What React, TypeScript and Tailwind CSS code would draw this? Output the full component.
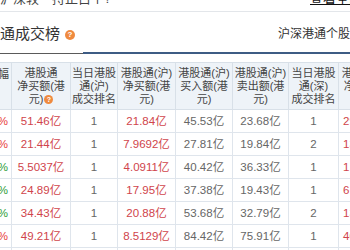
import React from "react";

const font = { fontFamily: '"Liberation Sans", "Noto Sans CJK SC", sans-serif' };

function Q() {
  return (
    <span className="inline-flex items-center justify-center w-[9px] h-[9px] rounded-full bg-[#ef8a3f] text-white text-[7px] leading-none align-middle ml-[1px] font-bold">
      ?
    </span>
  );
}

const widths = [50, 59, 47, 58, 57, 56, 50, 58];

type Cell = { t: string; c: string };

const rows: Cell[][] = [
  ["+0.63%", "51.46亿", "1", "21.84亿", "45.53亿", "23.68亿", "1", "29.62亿"],
  ["+1.12%", "21.44亿", "1", "7.9692亿", "27.81亿", "19.84亿", "2", "13.47亿"],
  ["-0.48%", "5.5037亿", "1", "4.0911亿", "40.42亿", "36.33亿", "1", "1.4126亿"],
  ["-0.75%", "24.89亿", "1", "17.95亿", "37.38亿", "19.43亿", "1", "6.9374亿"],
  ["-0.22%", "34.43亿", "1", "20.88亿", "53.68亿", "32.79亿", "2", "13.55亿"],
  ["+1.04%", "49.21亿", "1", "8.5129亿", "84.42亿", "75.91亿", "1", "40.70亿"],
  ["+0.36%", "30.12亿", "1", "12.30亿", "41.20亿", "28.90亿", "1", "17.82亿"],
].map((r) =>
  r.map((t, i) => {
    let c = "text-[#666]";
    if (i === 0) c = t.startsWith("+") ? "text-[#e8413e]" : "text-[#2f9e3a]";
    if (i === 1 || i === 3 || i === 7) c = "text-[#d0444b]";
    return { t, c };
  })
);

const headers: React.ReactNode[] = [
  <>涨跌幅</>,
  <>港股通<br />净买额(港<br />元)<Q /></>,
  <>当日港股<br />通(沪)<br />成交排名</>,
  <>港股通(沪)<br />净买额(港<br />元)</>,
  <>港股通(沪)<br />买入额(港<br />元)</>,
  <>港股通(沪)<br />卖出额(港<br />元)</>,
  <>当日港股<br />通(深)<br />成交排名</>,
  <>港股通(深)<br />净买额(港<br />元)</>,
];

export default function App() {
  return (
    <div className="w-[350px] h-[250px] overflow-hidden bg-white text-[#333]" style={font}>
      <div className="h-[12px] border-b border-[#e3e6ea] flex justify-between overflow-hidden">
        <div className="text-[13px] leading-[13px] -mt-[8px] text-[#444] whitespace-nowrap">沪深较　持正占个?</div>
        <div className="text-[13px] leading-[13px] -mt-[8px] text-[#111] underline whitespace-nowrap w-[40px] overflow-hidden">查看全部</div>
      </div>
      <div className="flex items-end h-[42px]">
        <div className="w-[83px] h-full flex items-center border-b border-[#5a5a5a]">
          <span className="text-[15px] text-[#333] whitespace-nowrap pt-[4px]">通成交榜</span>
          <span className="inline-flex items-center justify-center w-[10px] h-[10px] rounded-full bg-[#ef8a3f] text-white text-[8px] leading-none font-bold ml-[5px] mt-[4px]">?</span>
        </div>
        <div className="flex-1 h-full flex items-center justify-end border-b-2 border-[#3e5c84] overflow-hidden">
          <span className="text-[12px] text-[#333] whitespace-nowrap w-[72px] pt-[3px]">沪深港通个股</span>
        </div>
      </div>
      <div className="mt-[8px] overflow-hidden">
        <table className="table-fixed border-collapse ml-[-39px]" style={{ width: widths.reduce((a, b) => a + b, 0) }}>
          <colgroup>
            {widths.map((w, i) => (
              <col key={i} style={{ width: w }} />
            ))}
          </colgroup>
          <thead>
            <tr className="bg-[#eef3f8]">
              {headers.map((h, i) => (
                <th
                  key={i}
                  className={`h-[47px] border border-[#d8e0e8] font-normal text-[11px] leading-[13px] text-[#444] p-0 whitespace-nowrap overflow-hidden ${i === 0 ? "text-right pr-[2px] align-top pt-[5px]" : "text-center"}`}
                >
                  {h}
                </th>
              ))}
            </tr>
          </thead>
          <tbody>
            {rows.map((r, ri) => (
              <tr key={ri}>
                {r.map((cell, i) => (
                  <td
                    key={i}
                    className={`h-[23px] border border-[#dfe5ec] p-0 text-[11.5px] leading-[14px] whitespace-nowrap overflow-hidden ${cell.c} ${i === 0 ? "text-right pr-[3px]" : i === 7 ? "text-left pl-[4px]" : "text-center"}`}
                  >
                    {cell.t}
                  </td>
                ))}
              </tr>
            ))}
          </tbody>
        </table>
      </div>
    </div>
  );
}
